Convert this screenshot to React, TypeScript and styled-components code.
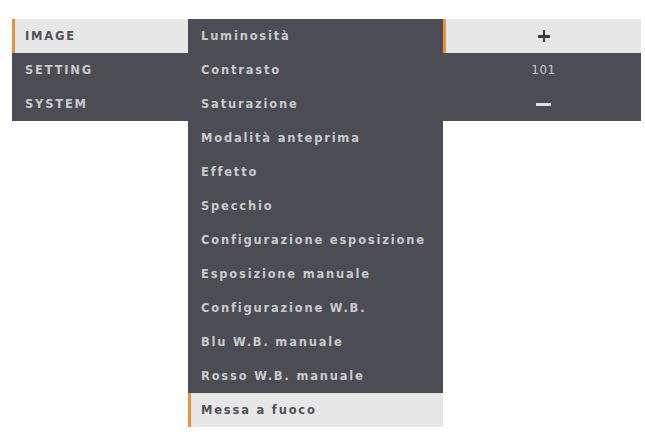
import styled, { createGlobalStyle } from "styled-components";

const GlobalStyle = createGlobalStyle`
  html, body {
    margin: 0;
    padding: 0;
    background: #ffffff;
  }
  body {
    font-family: "DejaVu Sans", "Liberation Sans", sans-serif;
  }
`;

const Screen = styled.div`
  display: flex;
  align-items: flex-start;
  padding: 19px 0 0 12px;
  width: 645px;
  height: 437px;
  box-sizing: border-box;
`;

const Column = styled.div<{ $width: number }>`
  display: flex;
  flex-direction: column;
  width: ${({ $width }) => $width}px;
  background: #4b4c54;
`;

const Item = styled.div<{ $active?: boolean; $center?: boolean }>`
  height: 34px;
  display: flex;
  align-items: center;
  justify-content: ${({ $center }) => ($center ? "center" : "flex-start")};
  padding-left: ${({ $center }) => ($center ? 0 : 10)}px;
  box-sizing: border-box;
  font-size: 11.5px;
  font-weight: bold;
  letter-spacing: 1.8px;
  white-space: nowrap;
  color: ${({ $active }) => ($active ? "#505055" : "#c9cacd")};
  background: ${({ $active }) => ($active ? "#e7e7e7" : "transparent")};
  border-left: 3px solid ${({ $active }) => ($active ? "#e8923a" : "transparent")};
`;

const Plus = styled.span`
  position: relative;
  width: 12px;
  height: 12px;
  &::before,
  &::after {
    content: "";
    position: absolute;
    background: #3a3a3e;
  }
  &::before {
    left: 0;
    right: 0;
    top: 5px;
    height: 2.5px;
  }
  &::after {
    top: 0;
    bottom: 0;
    left: 5px;
    width: 2.5px;
  }
`;

const Minus = styled.span`
  width: 15px;
  height: 3px;
  background: #e0e0e2;
`;

const Value = styled.span`
  font-weight: normal;
  letter-spacing: 0.5px;
  font-size: 12px;
`;

const sections = ["IMAGE", "SETTING", "SYSTEM"];

const imageItems = [
  "Luminosità",
  "Contrasto",
  "Saturazione",
  "Modalità anteprima",
  "Effetto",
  "Specchio",
  "Configurazione esposizione",
  "Esposizione manuale",
  "Configurazione W.B.",
  "Blu W.B. manuale",
  "Rosso W.B. manuale",
  "Messa a fuoco",
];

export default function App() {
  return (
    <>
      <GlobalStyle />
      <Screen>
        <Column $width={176}>
          {sections.map((s, i) => (
            <Item key={s} $active={i === 0}>
              {s}
            </Item>
          ))}
        </Column>
        <Column $width={255}>
          {imageItems.map((s, i) => (
            <Item key={s} $active={i === imageItems.length - 1}>
              {s}
            </Item>
          ))}
        </Column>
        <Column $width={198}>
          <Item $active $center>
            <Plus />
          </Item>
          <Item $center>
            <Value>101</Value>
          </Item>
          <Item $center>
            <Minus />
          </Item>
        </Column>
      </Screen>
    </>
  );
}
